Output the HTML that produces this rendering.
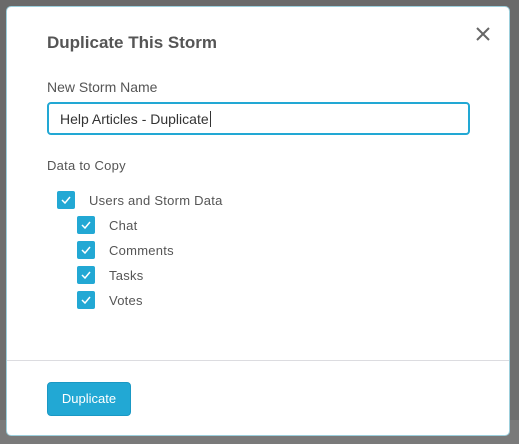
<!DOCTYPE html>
<html><head><style>
html,body{margin:0;padding:0;width:519px;height:444px;overflow:hidden;background:#6e6e6e;font-family:"Liberation Sans",sans-serif;}
.bgtop{position:absolute;left:0;top:0;width:519px;height:210px;background:#6a6a6a}
.bgbot{position:absolute;left:0;top:420px;width:519px;height:24px;background:#7a7a7a}
.modal{position:absolute;left:6px;top:6px;width:504px;height:430px;background:#fff;border:1px solid #9ccfdc;border-radius:5px;box-sizing:border-box;}
.t{position:absolute;color:#555;}
.l{letter-spacing:0.25px}
h1{position:absolute;left:40px;top:26px;margin:0;font-size:17px;font-weight:bold;color:#555;}
.input{position:absolute;left:40px;top:95px;width:423px;height:33px;box-sizing:border-box;border:2px solid #22a8d4;border-radius:4px;font-size:14px;color:#333;padding:7px 0 0 11px;}
.cb{position:absolute;width:18px;height:18px;background:#22a8d4;border-radius:2px;}
.cb svg{position:absolute;left:4px;top:5px}
.line{position:absolute;left:0;top:353px;width:502px;height:1px;background:#dcdce0}
.btn{position:absolute;left:40px;top:375px;width:84px;height:34px;background:#22a8d4;border:1px solid #1a98c4;border-radius:4px;box-sizing:border-box;color:#fff;font-size:13px;text-align:center;line-height:32px;}
</style></head><body>
<div class="bgtop"></div><div class="bgbot"></div>
<div class="modal">
<h1>Duplicate This Storm</h1>
<svg style="position:absolute;left:469px;top:20px" width="14" height="14"><path d="M1 1L13 13M13 1L1 13" stroke="#666" stroke-width="2"/></svg>
<div class="t" style="left:40px;top:72px;font-size:14px">New Storm Name</div>
<div class="input">Help Articles - Duplicate<span style="border-left:1px solid #333;margin-left:1px"></span></div>
<div class="t l" style="left:40px;top:151px;font-size:13px">Data to Copy</div>
<div class="cb" style="left:50px;top:184px"><svg width="10" height="8"><path d="M1 4L4 7L9 1" stroke="#fff" stroke-width="1.5" fill="none"/></svg></div>
<div class="t l" style="left:82px;top:186px;font-size:13px">Users and Storm Data</div>
<div class="cb" style="left:70px;top:209px"><svg width="10" height="8"><path d="M1 4L4 7L9 1" stroke="#fff" stroke-width="1.5" fill="none"/></svg></div>
<div class="t l" style="left:102px;top:211px;font-size:13px">Chat</div>
<div class="cb" style="left:70px;top:234px"><svg width="10" height="8"><path d="M1 4L4 7L9 1" stroke="#fff" stroke-width="1.5" fill="none"/></svg></div>
<div class="t l" style="left:102px;top:236px;font-size:13px">Comments</div>
<div class="cb" style="left:70px;top:259px"><svg width="10" height="8"><path d="M1 4L4 7L9 1" stroke="#fff" stroke-width="1.5" fill="none"/></svg></div>
<div class="t l" style="left:102px;top:261px;font-size:13px">Tasks</div>
<div class="cb" style="left:70px;top:284px"><svg width="10" height="8"><path d="M1 4L4 7L9 1" stroke="#fff" stroke-width="1.5" fill="none"/></svg></div>
<div class="t l" style="left:102px;top:286px;font-size:13px">Votes</div>
<div class="line"></div>
<div class="btn">Duplicate</div>
</div>
</body></html>
